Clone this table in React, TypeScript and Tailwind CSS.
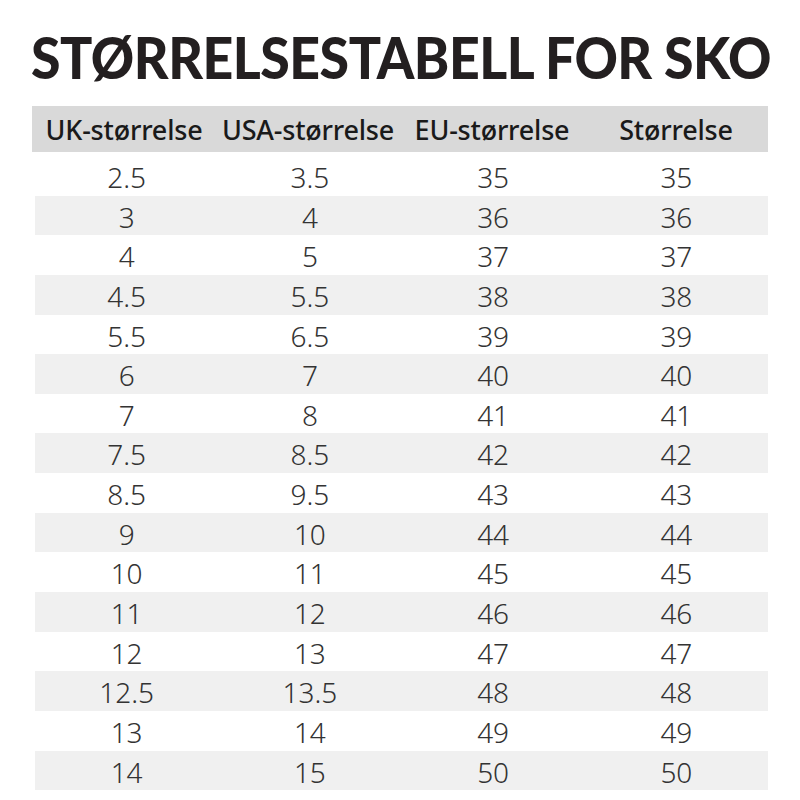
const rows: [string, string, string, string][] = [
  ["2.5", "3.5", "35", "35"],
  ["3", "4", "36", "36"],
  ["4", "5", "37", "37"],
  ["4.5", "5.5", "38", "38"],
  ["5.5", "6.5", "39", "39"],
  ["6", "7", "40", "40"],
  ["7", "8", "41", "41"],
  ["7.5", "8.5", "42", "42"],
  ["8.5", "9.5", "43", "43"],
  ["9", "10", "44", "44"],
  ["10", "11", "45", "45"],
  ["11", "12", "46", "46"],
  ["12", "13", "47", "47"],
  ["12.5", "13.5", "48", "48"],
  ["13", "14", "49", "49"],
  ["14", "15", "50", "50"],
];

const headers = ["UK-størrelse", "USA-størrelse", "EU-størrelse", "Størrelse"];

export default function App() {
  return (
    <div className="w-[800px] h-[800px] bg-white overflow-hidden">
      {/* Title */}
      <div className="pl-[31px] pt-[29px] h-[106px]">
        <h1 className="inline-block origin-left scale-x-[0.94] text-[57px] leading-[1] font-black tracking-[-0.5px] text-[#231f20] font-['Lato',sans-serif] whitespace-nowrap">
          STØRRELSESTABELL FOR SKO
        </h1>
      </div>

      {/* Table */}
      <div className="mx-[32px]">
        <div className="grid grid-cols-4 h-[46px] pt-[3px] items-center bg-[#d9d9d9] font-['Noto_Sans',sans-serif] text-[27px] font-medium text-[#1a1a1a]">
          {headers.map((h) => (
            <div key={h} className="text-center whitespace-nowrap tracking-[-0.2px]">
              {h}
            </div>
          ))}
        </div>
        <div className="pt-[4px]">
          {rows.map((r, i) => (
            <div
              key={i}
              className={`grid grid-cols-4 h-[39.65px] items-center ml-[3px] font-['Noto_Sans',sans-serif] text-[28px] font-light text-[#333333] ${
                i % 2 === 1 ? "bg-[#f0f0f0]" : "bg-white"
              }`}
            >
              {r.map((c, j) => (
                <div key={j} className="text-center">
                  {c}
                </div>
              ))}
            </div>
          ))}
        </div>
      </div>
    </div>
  );
}
